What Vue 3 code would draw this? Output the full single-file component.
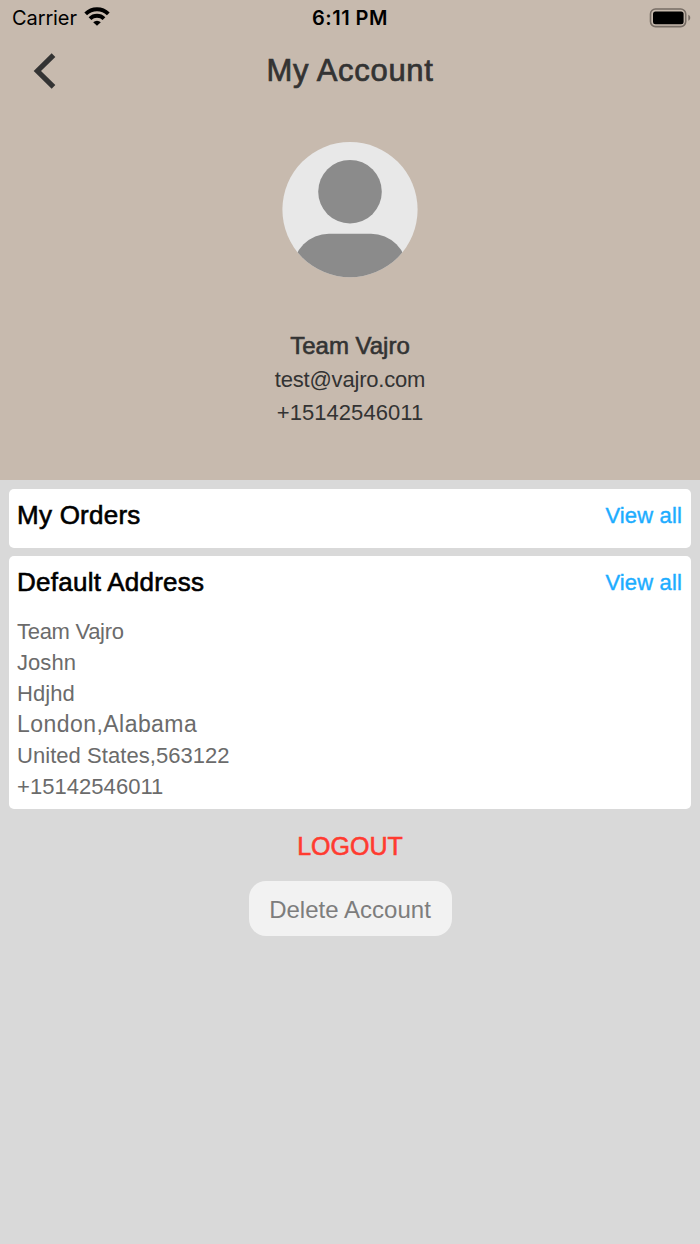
<script setup>
   import { ref } from 'vue';

   const user = ref({
      name: 'Team Vajro',
      email: 'test@vajro.com',
      phone: '+15142546011',
   });

   const address = ref([
      { id: 'name', text: 'Team Vajro' },
      { id: 'line1', text: 'Joshn' },
      { id: 'line2', text: 'Hdjhd' },
      { id: 'city', text: 'London,Alabama' },
      { id: 'country', text: 'United States,563122' },
      { id: 'phone', text: '+15142546011' },
   ]);
</script>

<template>
   <div class="screen">
      <header class="profile">
         <div class="status">
            <div class="status-left">
               <span class="carrier">Carrier</span>
               <svg class="wifi" viewBox="0 0 26 19" width="26" height="19">
                  <g fill="none" stroke="#000" stroke-width="3.9">
                     <path d="M1.7 6.9a16.2 16.2 0 0 1 22.6 0" />
                     <path d="M6 11.6a10 10 0 0 1 14 0" />
                  </g>
                  <path d="M13 18.8l-3.8-3.6a5.4 5.4 0 0 1 7.6 0z" />
               </svg>
            </div>
            <span class="time">6:11 PM</span>
            <div class="status-right">
               <svg viewBox="0 0 42 20" width="42" height="20">
                  <rect
                     x="1.5"
                     y="1"
                     width="35.2"
                     height="17.6"
                     rx="5"
                     fill="none"
                     stroke="#776d65"
                     stroke-width="1.6"
                  />
                  <rect x="4" y="3.6" width="30.6" height="12.6" rx="2.5" />
                  <path d="M39.3 6.8c2.6 1 2.6 5 0 6z" fill="#776d65" />
               </svg>
            </div>
         </div>

         <div class="navbar">
            <button class="back" aria-label="Back">
               <svg viewBox="0 0 24 36" width="24" height="36">
                  <path
                     d="M20.5 2.2L4.4 18l16.1 15.8"
                     fill="none"
                     stroke="#333"
                     stroke-width="5.2"
                  />
               </svg>
            </button>
            <h1 class="title">My Account</h1>
         </div>

         <svg class="avatar" viewBox="0 0 136 136" width="136" height="136">
            <clipPath id="avatar-clip">
               <circle cx="68" cy="67.6" r="67.6" />
            </clipPath>
            <circle cx="68" cy="67.6" r="67.6" fill="#e8e8e8" />
            <circle cx="68" cy="49.7" r="31.8" fill="#8b8b8b" />
            <rect
               x="11"
               y="91.7"
               width="114"
               height="72"
               rx="36"
               fill="#8b8b8b"
               clip-path="url(#avatar-clip)"
            />
         </svg>

         <div class="name">{{ user.name }}</div>
         <div class="email">{{ user.email }}</div>
         <div class="phone">{{ user.phone }}</div>
      </header>

      <main class="content">
         <section class="card orders">
            <div class="card-head">
               <h2 class="card-title">My Orders</h2>
               <a class="view-all">View all</a>
            </div>
         </section>

         <section class="card addresses">
            <div class="card-head">
               <h2 class="card-title">Default Address</h2>
               <a class="view-all">View all</a>
            </div>
            <div class="address">
               <div
                  v-for="line in address"
                  :key="line.id"
                  :class="'line-' + line.id"
               >
                  {{ line.text }}
               </div>
            </div>
         </section>

         <button class="logout">LOGOUT</button>
         <button class="delete">Delete Account</button>
      </main>
   </div>
</template>

<style>
   body {
      margin: 0;
      background-color: #d9d9d9;
   }
</style>

<style scoped>
   .screen {
      display: flex;
      flex-direction: column;
      width: 100%;
      min-height: 1244px;
      background-color: #d9d9d9;
      font-family: 'Liberation Sans', Arial, sans-serif;
      white-space: nowrap;
   }
   button {
      padding: 0;
      border: none;
      background: none;
      font-family: inherit;
      cursor: pointer;
   }

   /* HEADER */
   .profile {
      display: flex;
      flex-direction: column;
      align-items: center;
      box-sizing: border-box;
      height: 480px;
      background-color: #c7baae;
      color: #333;
   }
   .status {
      display: grid;
      grid-template-columns: 1fr auto 1fr;
      align-items: center;
      box-sizing: border-box;
      width: 100%;
      height: 36px;
      padding: 0 9px 0 12px;
      font-family: Inter, sans-serif;
      color: #000;
   }
   .status-left {
      display: flex;
      align-items: center;
      gap: 7px;
   }
   .carrier {
      font-size: 20px;
      letter-spacing: -0.1px;
   }
   .wifi {
      margin-top: -3px;
   }
   .time {
      margin-left: -3px;
      font-size: 20px;
      font-weight: 600;
      letter-spacing: 0.5px;
   }
   .status-right {
      display: flex;
      justify-content: flex-end;
      margin-top: -1px;
   }
   .navbar {
      display: grid;
      grid-template-columns: 1fr auto 1fr;
      align-items: center;
      width: 100%;
      height: 70px;
   }
   .back {
      display: flex;
      margin-left: 33px;
   }
   .title {
      margin: 0;
      font-size: 31px;
      font-weight: 400;
      letter-spacing: 0.7px;
      -webkit-text-stroke: 0.7px;
   }
   .avatar {
      margin-top: 36px;
   }
   .name {
      margin-top: 51px;
      font-size: 24px;
      line-height: 34px;
      letter-spacing: 0;
      -webkit-text-stroke: 0.6px;
   }
   .email,
   .phone {
      font-size: 22px;
      line-height: 33px;
   }
   .email {
      letter-spacing: -0.2px;
   }
   .phone {
      letter-spacing: 0.05px;
   }

   /* CARDS */
   .content {
      display: flex;
      flex-direction: column;
      align-items: center;
      padding: 9px 9px 0;
   }
   .card {
      box-sizing: border-box;
      width: 100%;
      padding: 0 9px 0 8px;
      border-radius: 5px;
      background-color: #fff;
   }
   .orders {
      height: 58.5px;
   }
   .addresses {
      height: 253px;
      margin-top: 8.5px;
   }
   .card-head {
      display: flex;
      justify-content: space-between;
      align-items: center;
      height: 52px;
   }
   .card-title {
      margin: 0;
      font-size: 26px;
      font-weight: 400;
      letter-spacing: 0.25px;
      color: #000;
      -webkit-text-stroke: 0.6px;
   }
   .view-all {
      margin-top: 1px;
      font-size: 22px;
      letter-spacing: 0.15px;
      color: #1dadff;
      -webkit-text-stroke: 0.4px;
      cursor: pointer;
   }
   .address {
      margin-top: 8px;
      font-size: 22px;
      line-height: 31px;
      letter-spacing: 0.05px;
      color: #6b6b6b;
   }
   .line-name {
      letter-spacing: -0.3px;
   }
   .line-city {
      font-size: 23px;
      letter-spacing: 0.45px;
   }

   /* ACTIONS */
   .logout {
      margin-top: 17px;
      font-size: 25px;
      line-height: 40px;
      color: #ff3b30;
      -webkit-text-stroke: 0.6px;
   }
   .delete {
      width: 203px;
      height: 55px;
      margin-top: 15px;
      padding-top: 2px;
      border-radius: 17px;
      background-color: #f2f2f2;
      font-size: 24px;
      letter-spacing: 0.02px;
      color: #7d7d7d;
   }
</style>
